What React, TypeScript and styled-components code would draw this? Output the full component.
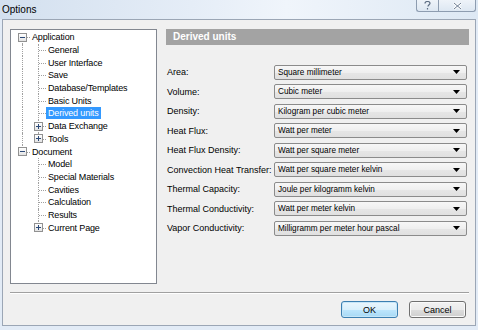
import React from "react";
import styled, { createGlobalStyle, css } from "styled-components";

const Global = createGlobalStyle`
  html, body { margin: 0; padding: 0; }
  body {
    background: #e2ebf6;
    font-family: "Liberation Sans", Arial, sans-serif;
    font-size: 9px;
    color: #000;
  }
  * { box-sizing: border-box; }
`;

const Window = styled.div`
  width: 478px;
  height: 330px;
  display: flex;
  flex-direction: column;
  background: #e2ebf6;
  overflow: hidden;
`;

const TitleBar = styled.div`
  height: 19px;
  flex: none;
  display: flex;
  align-items: flex-start;
  justify-content: space-between;
  padding: 0 2px 0 2px;
  background: linear-gradient(to right, #d3e0ef 0%, #e5edf7 40%, #f0f5fb 60%, #dde8f4 100%);
`;

const Title = styled.div`
  font-family: "Liberation Sans", Arial, sans-serif;
  font-size: 10px;
  line-height: 19px;
  color: #000;
`;

const CaptionButtons = styled.div`
  display: flex;
  height: 12px;
`;

const CaptionButton = styled.div<{ $w: number; $first?: boolean }>`
  width: ${(p) => p.$w}px;
  height: 12px;
  display: flex;
  align-items: center;
  justify-content: center;
  border: 1px solid #8d9cb0;
  border-top: none;
  background: linear-gradient(#eef3f9, #dde7f2);
  ${(p) =>
    p.$first
      ? css`border-bottom-left-radius: 3px; border-right: none;`
      : css`border-bottom-right-radius: 3px;`}
`;

const Client = styled.div`
  margin-left: 2px;
  width: 474px;
  height: 307px;
  flex: none;
  background: #f0f0f0;
  border: 1px solid #9ba6b5;
  padding: 9px 6px 0 7px;
  display: flex;
  flex-direction: column;
`;

const Main = styled.div`
  height: 255px;
  flex: none;
  display: flex;
  gap: 9px;
`;

const TreeBox = styled.div`
  width: 147px;
  height: 100%;
  background: #fff;
  border: 1px solid #828790;
  padding: 1px 0 0 3px;
  display: flex;
  flex-direction: column;
`;

const TreeRow = styled.div`
  height: 12.7px;
  display: flex;
  align-items: stretch;
`;

type VLine = "none" | "full" | "top" | "bottom";

const Guide = styled.div<{ $v: VLine; $h: boolean }>`
  width: 16px;
  flex: none;
  position: relative;
  display: flex;
  align-items: center;
  justify-content: center;
  &::before {
    content: "";
    display: ${(p) => (p.$v === "none" ? "none" : "block")};
    position: absolute;
    left: 8px;
    width: 0;
    border-left: 1px dotted #a0a0a0;
    top: ${(p) => (p.$v === "bottom" ? "50%" : "0")};
    bottom: ${(p) => (p.$v === "top" ? "50%" : "0")};
  }
  &::after {
    content: "";
    display: ${(p) => (p.$h ? "block" : "none")};
    position: absolute;
    left: 9px;
    right: 0;
    top: 50%;
    height: 0;
    border-top: 1px dotted #a0a0a0;
  }
`;

const Expander = styled.div`
  position: relative;
  z-index: 1;
  width: 9px;
  height: 9px;
  margin-left: 1px;
  border: 1px solid #919191;
  background: linear-gradient(#ffffff, #e3e3e3);
  display: flex;
  align-items: center;
  justify-content: center;
`;

const Label = styled.div<{ $selected?: boolean }>`
  padding: 0 2px;
  white-space: nowrap;
  align-self: center;
  height: 12px;
  line-height: 12px;
  letter-spacing: -0.15px;
  ${(p) =>
    p.$selected &&
    css`
      background: #3399ff;
      color: #fff;
    `}
`;

const Panel = styled.div`
  flex: 1;
  display: flex;
  flex-direction: column;
`;

const PanelHeader = styled.div`
  height: 15.5px;
  background: #a3a3a3;
  color: #fff;
  font-weight: bold;
  font-size: 10px;
  line-height: 15.5px;
  padding-left: 7px;
`;

const Fields = styled.div`
  margin-top: 20px;
  display: flex;
  flex-direction: column;
  gap: 4.5px;
`;

const FieldRow = styled.div`
  display: flex;
  align-items: center;
  height: 15px;
`;

const FieldLabel = styled.div`
  width: 108px;
  white-space: nowrap;
  padding-left: 1px;
`;

const Combo = styled.div`
  width: 193px;
  height: 15px;
  border: 1px solid #8b8b8b;
  border-radius: 2px;
  background: linear-gradient(#f7f7f7 0%, #efefef 50%, #e6e6e6 51%, #e0e0e0 100%);
  display: flex;
  align-items: center;
  justify-content: space-between;
  padding: 0 6px 0 3px;
  white-space: nowrap;
  font-size: 8.2px;
`;

const Separator = styled.div`
  margin-top: 8px;
  height: 2px;
  border-top: 1px solid #a0a0a0;
  border-bottom: 1px solid #ffffff;
`;

const ButtonRow = styled.div`
  margin-top: 7px;
  display: flex;
  justify-content: flex-end;
  gap: 11px;
  padding-right: 3px;
`;

const Button = styled.div<{ $default?: boolean }>`
  width: 57px;
  height: 17px;
  display: flex;
  align-items: center;
  justify-content: center;
  border-radius: 3px;
  font-size: 9px;
  border: 1px solid ${(p) => (p.$default ? "#3c7fb1" : "#707070")};
  background: ${(p) =>
    p.$default
      ? "linear-gradient(#eaf6fd 0%, #d9f0fc 50%, #bee6fd 51%, #a7d9f5 100%)"
      : "linear-gradient(#f2f2f2 0%, #ebebeb 50%, #dddddd 51%, #cfcfcf 100%)"};
  box-shadow: inset 0 0 0 1px ${(p) => (p.$default ? "#c6e6f8" : "#fafafa")};
`;

type TreeItem = {
  label: string;
  guides: { v: VLine; h: boolean }[];
  exp?: "plus" | "minus";
  selected?: boolean;
};

const P = { v: "full" as VLine, h: false };
const N = { v: "none" as VLine, h: false };
const T = { v: "full" as VLine, h: true };
const E = { v: "top" as VLine, h: true };
const S = { v: "bottom" as VLine, h: true };

const tree: TreeItem[] = [
  { label: "Application", guides: [S], exp: "minus" },
  { label: "General", guides: [P, T] },
  { label: "User Interface", guides: [P, T] },
  { label: "Save", guides: [P, T] },
  { label: "Database/Templates", guides: [P, T] },
  { label: "Basic Units", guides: [P, T] },
  { label: "Derived units", guides: [P, T], selected: true },
  { label: "Data Exchange", guides: [P, T], exp: "plus" },
  { label: "Tools", guides: [P, E], exp: "plus" },
  { label: "Document", guides: [E], exp: "minus" },
  { label: "Model", guides: [N, T] },
  { label: "Special Materials", guides: [N, T] },
  { label: "Cavities", guides: [N, T] },
  { label: "Calculation", guides: [N, T] },
  { label: "Results", guides: [N, T] },
  { label: "Current Page", guides: [N, E], exp: "plus" },
];

const fields: [string, string][] = [
  ["Area:", "Square millimeter"],
  ["Volume:", "Cubic meter"],
  ["Density:", "Kilogram per cubic meter"],
  ["Heat Flux:", "Watt per meter"],
  ["Heat Flux Density:", "Watt per square meter"],
  ["Convection Heat Transfer:", "Watt per square meter kelvin"],
  ["Thermal Capacity:", "Joule per kilogramm kelvin"],
  ["Thermal Conductivity:", "Watt per meter kelvin"],
  ["Vapor Conductivity:", "Milligramm per meter hour pascal"],
];

const Sign = ({ plus }: { plus: boolean }) => (
  <svg width="5" height="5" viewBox="0 0 5 5">
    <rect x="0" y="2" width="5" height="1" fill="#2c4a78" />
    {plus && <rect x="2" y="0" width="1" height="5" fill="#2c4a78" />}
  </svg>
);

const Arrow = () => (
  <svg width="7" height="4" viewBox="0 0 7 4">
    <path d="M0 0h7L3.5 4z" fill="#000" />
  </svg>
);

export default function App() {
  return (
    <>
      <Global />
      <Window>
        <TitleBar>
          <Title>Options</Title>
          <CaptionButtons>
            <CaptionButton $w={22} $first>
              <svg width="7" height="9" viewBox="0 0 7 9">
                <path
                  d="M1 2.5C1 1 2 0.5 3.5 0.5S6 1.3 6 2.5 4 4 4 5.5M3.5 7v1.5"
                  fill="none"
                  stroke="#5d6d83"
                  strokeWidth="1.2"
                />
              </svg>
            </CaptionButton>
            <CaptionButton $w={38}>
              <svg width="9" height="8" viewBox="0 0 9 8">
                <path d="M1 1l7 6M8 1L1 7" stroke="#ffffff" strokeWidth="2.6" />
                <path d="M1 1l7 6M8 1L1 7" stroke="#6a7b91" strokeWidth="1" />
              </svg>
            </CaptionButton>
          </CaptionButtons>
        </TitleBar>
        <Client>
          <Main>
            <TreeBox>
              {tree.map((item) => (
                <TreeRow key={item.label}>
                  {item.guides.map((g, i) => (
                    <Guide key={i} $v={g.v} $h={g.h}>
                      {i === item.guides.length - 1 && item.exp && (
                        <Expander>
                          <Sign plus={item.exp === "plus"} />
                        </Expander>
                      )}
                    </Guide>
                  ))}
                  <Label $selected={item.selected}>{item.label}</Label>
                </TreeRow>
              ))}
            </TreeBox>
            <Panel>
              <PanelHeader>Derived units</PanelHeader>
              <Fields>
                {fields.map(([label, value]) => (
                  <FieldRow key={label}>
                    <FieldLabel>{label}</FieldLabel>
                    <Combo>
                      <span>{value}</span>
                      <Arrow />
                    </Combo>
                  </FieldRow>
                ))}
              </Fields>
            </Panel>
          </Main>
          <Separator />
          <ButtonRow>
            <Button $default>OK</Button>
            <Button>Cancel</Button>
          </ButtonRow>
        </Client>
      </Window>
    </>
  );
}
